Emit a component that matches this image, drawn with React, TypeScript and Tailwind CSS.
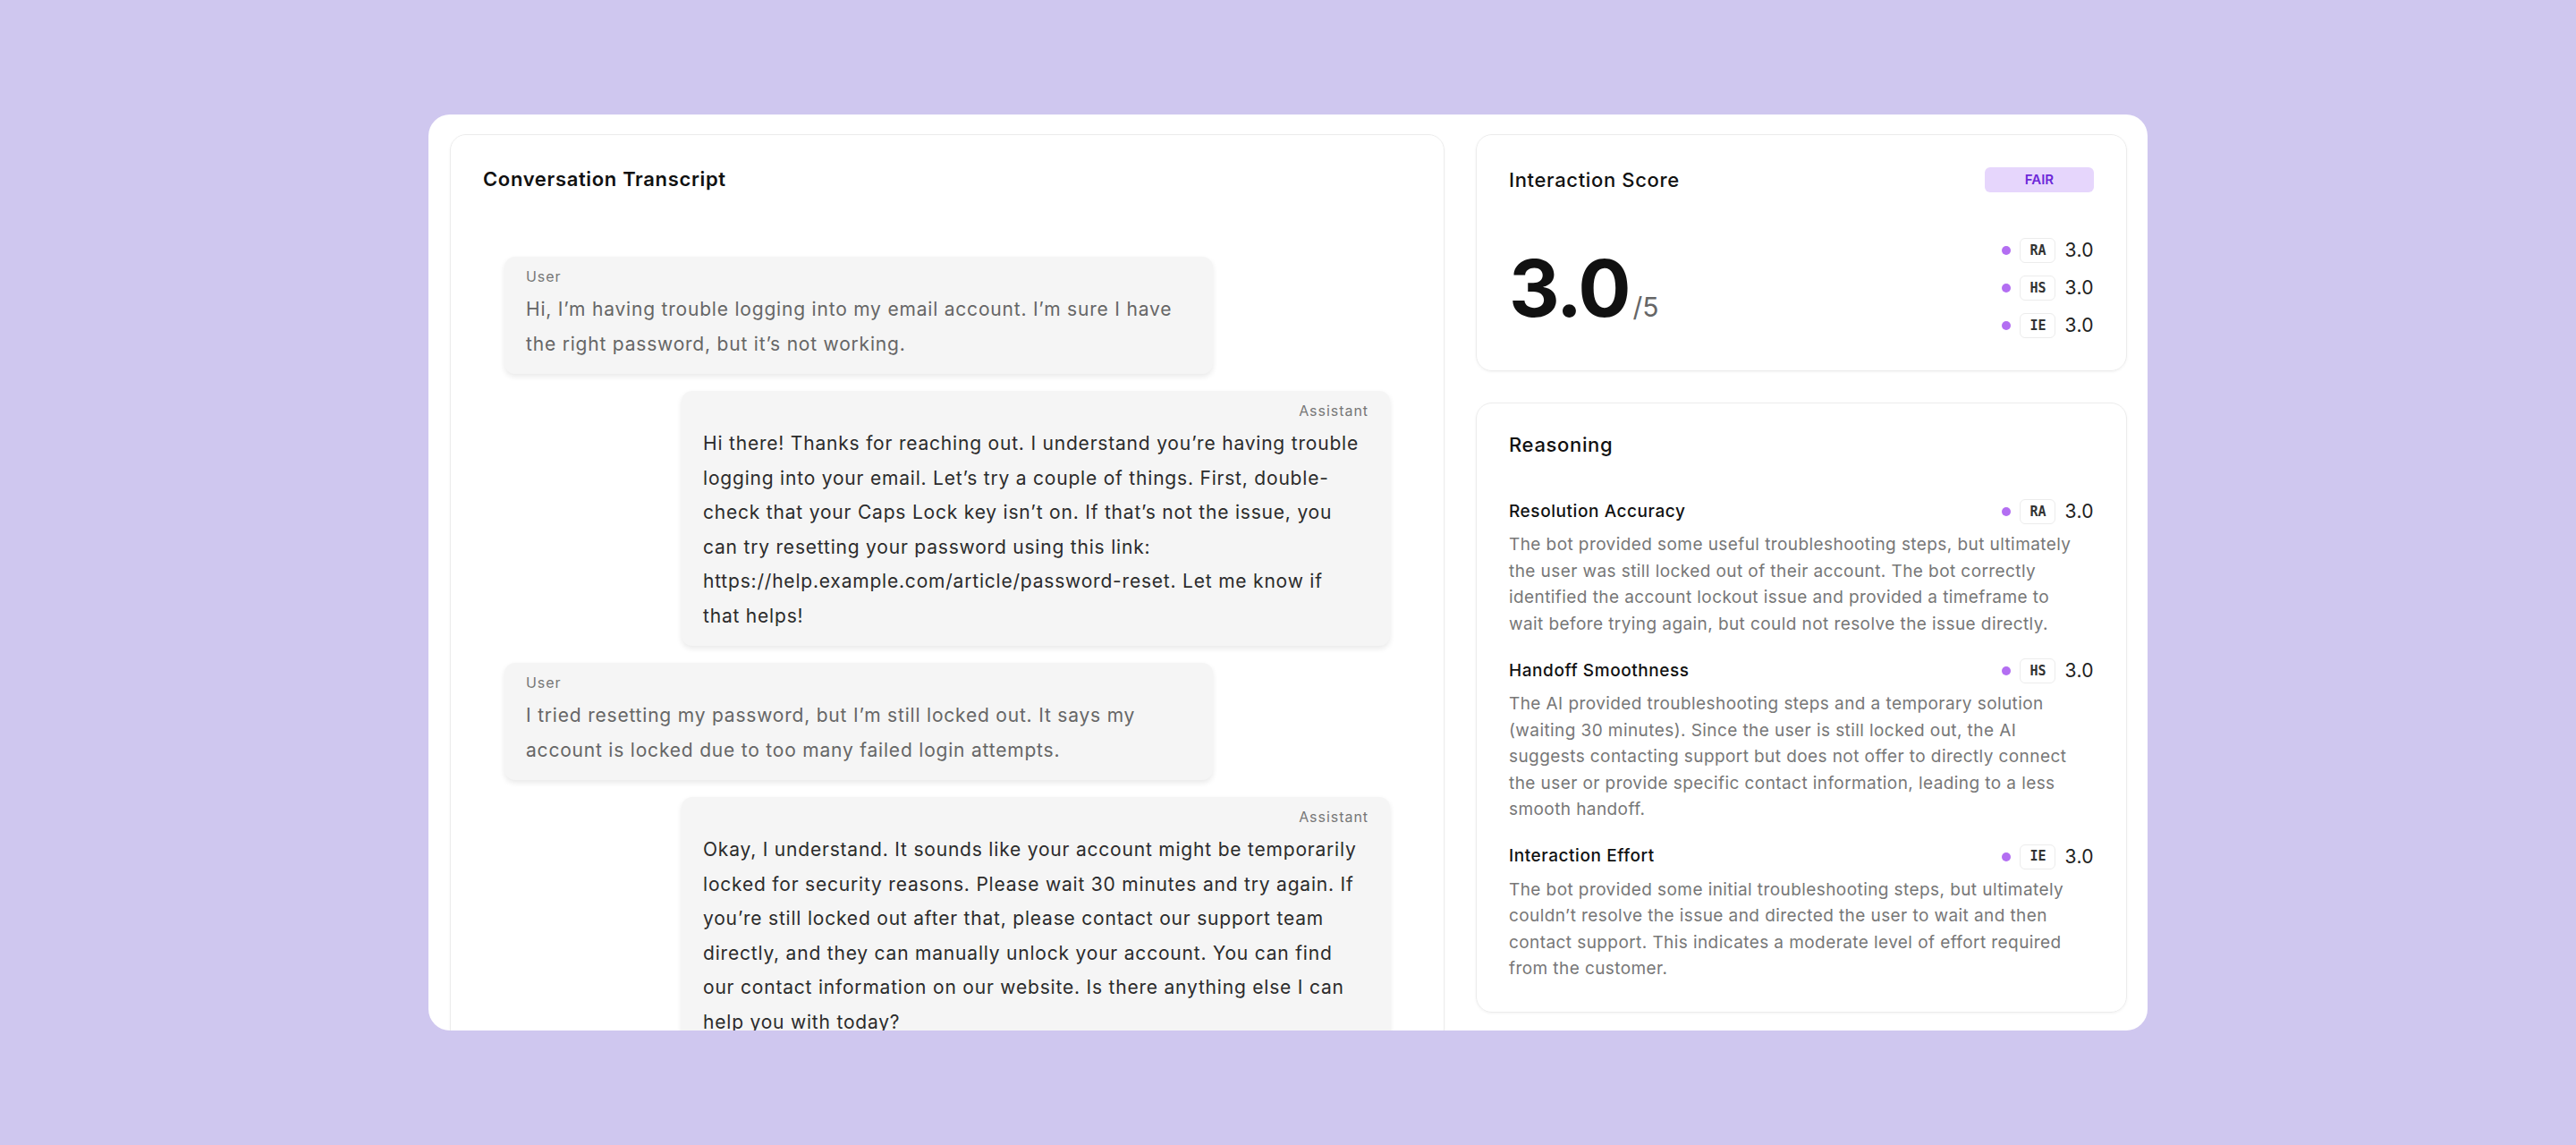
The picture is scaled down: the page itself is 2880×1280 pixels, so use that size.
import React from 'react';

interface Message {
  role: 'User' | 'Assistant';
  text: string;
}

interface Metric {
  code: string;
  title: string;
  score: string;
  reasoning: string;
}

const messages: Message[] = [
  {
    role: 'User',
    text: 'Hi, I’m having trouble logging into my email account. I’m sure I have the right password, but it’s not working.',
  },
  {
    role: 'Assistant',
    text: 'Hi there! Thanks for reaching out. I understand you’re having trouble logging into your email. Let’s try a couple of things. First, double-check that your Caps Lock key isn’t on. If that’s not the issue, you can try resetting your password using this link: https://help.example.com/article/password-reset. Let me know if that\u00a0helps!',
  },
  {
    role: 'User',
    text: 'I tried resetting my password, but I’m still locked out. It says my account is locked due to too many failed login attempts.',
  },
  {
    role: 'Assistant',
    text: 'Okay, I understand. It sounds like your account might be temporarily locked for security reasons. Please wait 30 minutes and try again. If you’re still locked out after that, please contact our support team directly, and they can manually unlock your account. You can find our contact information on our website. Is there anything else I can help you with today?',
  },
];

const metrics: Metric[] = [
  {
    code: 'RA',
    title: 'Resolution Accuracy',
    score: '3.0',
    reasoning:
      'The bot provided some useful troubleshooting steps, but ultimately the user was still locked out of their account. The bot correctly identified the account lockout issue and provided a timeframe to wait before trying again, but could not resolve the issue directly.',
  },
  {
    code: 'HS',
    title: 'Handoff Smoothness',
    score: '3.0',
    reasoning:
      'The AI provided troubleshooting steps and a temporary solution (waiting 30 minutes). Since the user is still locked out, the AI suggests contacting support but does not offer to directly connect the user or provide specific contact information, leading to a less smooth handoff.',
  },
  {
    code: 'IE',
    title: 'Interaction Effort',
    score: '3.0',
    reasoning:
      'The bot provided some initial troubleshooting steps, but ultimately couldn’t resolve the issue and directed the user to wait and then contact support. This indicates a moderate level of effort required from the customer.',
  },
];

const MetricTag: React.FC<{ code: string; score: string }> = ({ code, score }) => (
  <div className="flex items-center h-[28px]">
    <span className="w-[10px] h-[10px] rounded-full bg-[#b36ef2]" />
    <span className="ml-[10px] w-[40px] h-[28px] flex items-center justify-center rounded-md border border-[#ececec] bg-white font-['DejaVu_Sans_Mono',monospace] text-[15px] font-semibold text-[#333]">
      {code}
    </span>
    <span className="ml-[10px] text-[21px] tracking-[0.02em] text-[#222]">{score}</span>
  </div>
);

const Bubble: React.FC<{ message: Message }> = ({ message }) => {
  const isUser = message.role === 'User';
  return (
    <div
      className={
        isUser
          ? 'self-start w-[80%] bg-[#f5f5f5] rounded-xl px-6 pt-3 pb-[14px] shadow-[0_3px_6px_rgba(0,0,0,0.09)]'
          : 'self-end w-[80%] bg-[#f5f5f5] rounded-xl px-6 pt-3 pb-[14px] shadow-[0_3px_6px_rgba(0,0,0,0.09)]'
      }
    >
      <div
        className={
          isUser
            ? 'text-[16px] leading-5 tracking-[0.06em] text-[#777]'
            : 'text-[16px] leading-5 tracking-[0.06em] text-[#777] text-right'
        }
      >
        {message.role}
      </div>
      <p
        className={
          isUser
            ? 'mt-2 text-[21px] leading-[38.5px] tracking-[0.038em] text-[#666]'
            : 'mt-2 text-[21px] leading-[38.5px] tracking-[0.038em] text-[#2b2b2b]'
        }
      >
        {message.text}
      </p>
    </div>
  );
};

const App: React.FC = () => {
  return (
    <div className="w-full h-[1280px] bg-[#cfc7ef] flex items-center justify-center font-['Inter',sans-serif]">
      <div className="w-[1922px] h-[1024px] bg-white rounded-[24px] overflow-hidden flex items-start gap-[35px] px-6 pt-[22px]">
        {/* transcript */}
        <div className="w-[1112px] shrink-0 rounded-[18px] border-[1.5px] border-[#ececec] shadow-[0_1px_3px_rgba(0,0,0,0.04)] px-9 pt-[35px] pb-9">
          <h3 className="text-[22px] leading-[28px] font-semibold tracking-[0.03em] text-[#111]">Conversation Transcript</h3>
          <div className="mt-[73px] px-6 flex flex-col gap-[19px]">
            {messages.map((m, i) => (
              <Bubble key={i} message={m} />
            ))}
          </div>
        </div>

        {/* scores */}
        <div className="w-[728px] shrink-0 flex flex-col gap-[35px]">
          <div className="rounded-[18px] border-[1.5px] border-[#ececec] shadow-[0_1px_3px_rgba(0,0,0,0.05)] px-9 pt-9 pb-[36px]">
            <div className="flex items-center justify-between h-[28px]">
              <h3 className="text-[22px] font-medium tracking-[0.03em] text-[#111]">Interaction Score</h3>
              <span className="w-[122px] h-[28px] flex items-center justify-center rounded-md bg-[#e6d6fc] text-[15px] font-semibold text-[#6d28d9]">
                FAIR
              </span>
            </div>
            <div className="mt-[51px] flex items-center justify-between">
              <div className="flex items-baseline">
                <span className="text-[88px] leading-none font-bold tracking-tight text-[#111]">3.0</span>
                <span className="ml-1 text-[30px] text-[#666]">/5</span>
              </div>
              <div className="flex flex-col gap-[14px]">
                {metrics.map((m) => (
                  <MetricTag key={m.code} code={m.code} score={m.score} />
                ))}
              </div>
            </div>
          </div>

          <div className="rounded-[18px] border-[1.5px] border-[#ececec] shadow-[0_1px_3px_rgba(0,0,0,0.05)] px-9 pt-[32px] pb-[33px]">
            <h3 className="text-[22px] leading-[28px] font-medium tracking-[0.03em] text-[#111]">Reasoning</h3>
            <div className="mt-[47px] flex flex-col gap-[24px]">
              {metrics.map((m) => (
                <div key={m.code}>
                  <div className="flex items-center justify-between h-[28px]">
                    <span className="text-[19px] font-medium tracking-[0.03em] text-[#111]">{m.title}</span>
                    <MetricTag code={m.code} score={m.score} />
                  </div>
                  <p className="mt-2 pr-[6px] text-[19px] leading-[29.5px] tracking-[0.022em] text-[#777]">{m.reasoning}</p>
                </div>
              ))}
            </div>
          </div>
        </div>
      </div>
    </div>
  );
};

export default App;
